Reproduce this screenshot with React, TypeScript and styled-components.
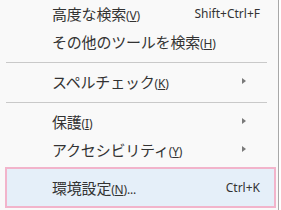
import React from "react";
import styled, { createGlobalStyle } from "styled-components";

const Global = createGlobalStyle`
  html, body { margin: 0; padding: 0; background: #ffffff; }
  body { font-family: "Noto Sans CJK JP", "Noto Sans", sans-serif; }
`;

const Menu = styled.div`
  width: 279px;
  height: 210px;
  background: #f9f9f9;
  border-right: 1px solid #a8a8a8;
  display: flex;
  flex-direction: column;
  box-sizing: border-box;
`;

const Row = styled.div`
  height: 28px;
  display: flex;
  align-items: center;
  padding: 0 18px 2px 52px;
  box-sizing: border-box;
`;

const HighlightRow = styled(Row)`
  margin: 3px 2px 0 5px;
  height: 41px;
  padding: 0 14px 1px 45px;
  border: 2px solid #f2b4cb;
  background: #e5eff9;
`;

const Label = styled.span`
  flex: 1;
  font-size: 15px;
  color: #333333;
  white-space: nowrap;
  letter-spacing: -0.2px;
`;

const Mnemonic = styled.span`
  font-family: "Noto Sans", sans-serif;
  font-size: 12px;
  color: #333333;
  u { text-decoration: underline; text-underline-offset: 1px; }
`;

const Shortcut = styled.span`
  font-family: "Noto Sans", sans-serif;
  font-size: 12px;
  color: #333333;
`;

const Arrow = styled.span`
  width: 0;
  height: 0;
  border-top: 3.5px solid transparent;
  border-bottom: 3.5px solid transparent;
  border-left: 4px solid #7a7a7a;
  margin-right: 14px;
`;

const Separator = styled.div`
  height: 1px;
  background: #c9c9c9;
  margin: 6px 11px 5px 6px;
`;

const mn = (l: string) => (
  <Mnemonic>
    (<u>{l}</u>)
  </Mnemonic>
);

export default function App() {
  return (
    <>
      <Global />
      <Menu>
        <Row>
          <Label>高度な検索{mn("V")}</Label>
          <Shortcut>Shift+Ctrl+F</Shortcut>
        </Row>
        <Row>
          <Label>その他のツールを検索{mn("H")}</Label>
        </Row>
        <Separator />
        <Row>
          <Label>スペルチェック{mn("K")}</Label>
          <Arrow />
        </Row>
        <Separator />
        <Row>
          <Label>保護{mn("I")}</Label>
          <Arrow />
        </Row>
        <Row>
          <Label>アクセシビリティ{mn("Y")}</Label>
          <Arrow />
        </Row>
        <HighlightRow>
          <Label>
            環境設定{mn("N")}
            <Mnemonic>...</Mnemonic>
          </Label>
          <Shortcut>Ctrl+K</Shortcut>
        </HighlightRow>
      </Menu>
    </>
  );
}
